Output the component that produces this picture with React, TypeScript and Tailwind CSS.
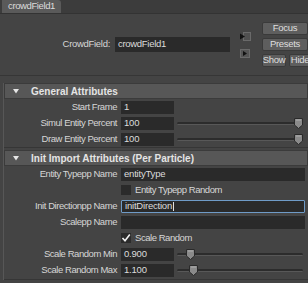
import React from "react";

const font = { fontFamily: '"Liberation Sans", Arial, sans-serif' };

function Label({ text, w = 113 }: { text: string; w?: number }) {
    return (
        <div
            className="shrink-0 text-right text-[9.5px] tracking-[-0.45px] text-[#d6d6d6] pr-[1px]"
            style={{ width: w }}
        >
            {text}
        </div>
    );
}

function Field({ value, width, focus }: { value: string; width: number; focus?: boolean }) {
    return (
        <div
            className={`h-[13px] bg-[#2a2a2a] flex items-center pl-[3px] text-[9.5px] tracking-[-0.2px] text-[#dcdcdc] leading-none ${
                focus ? "border border-[#6f9bc7] rounded-[1px]" : ""
            }`}
            style={{ width }}
        >
            {value}
            {focus && <span className="ml-[1px] w-px h-[9px] bg-[#e0e0e0]" />}
        </div>
    );
}

function Slider({ pos }: { pos: number }) {
    return (
        <div className="relative ml-[3px] w-[126px] h-[13px] flex items-center">
            <div className="w-full h-[3px] bg-[#2c2c2c] border-b border-[#585858] rounded-full" />
            <svg className="absolute top-[1px]" style={{ left: pos }} width="9" height="11" viewBox="0 0 9 11">
                <path d="M0.5 0.5 H8.5 V7 L4.5 10.5 L0.5 7 Z" fill="#8a8a8a" stroke="#2a2a2a" />
                <path d="M2 2 H7" stroke="#b0b0b0" />
            </svg>
        </div>
    );
}

function Row({ children }: { children: React.ReactNode }) {
    return <div className="h-[16px] flex items-center">{children}</div>;
}

function Check({ checked, text }: { checked?: boolean; text: string }) {
    return (
        <Row>
            <div className="w-[117px]" />
            <div className="w-[10px] h-[10px] bg-[#2b2b2b] flex items-center justify-center">
                {checked && (
                    <svg width="10" height="10" viewBox="0 0 10 10">
                        <path d="M1.5 5 L4 7.8 L8.8 1.5" fill="none" stroke="#f0f0f0" strokeWidth="1.6" />
                    </svg>
                )}
            </div>
            <span className="ml-[4px] text-[9.5px] tracking-[-0.45px] text-[#d6d6d6]">{text}</span>
        </Row>
    );
}

function Header({ title }: { title: string }) {
    return (
        <div className="h-[16px] flex items-center bg-[#575757] border border-[#3b3b3b]">
            <svg className="ml-[8px]" width="6" height="5" viewBox="0 0 6 5">
                <path d="M0 0 H6 L3 4.5 Z" fill="#e6e6e6" />
            </svg>
            <span className="ml-[12px] text-[10px] font-bold text-[#e4e4e4]">{title}</span>
        </div>
    );
}

function Button({ text, w }: { text: string; w: number }) {
    return (
        <div
            className="h-[13px] bg-[#5e5e5e] border border-[#3a3a3a] rounded-[2px] flex items-center justify-center text-[9.5px] tracking-[-0.3px] text-[#dedede]"
            style={{ width: w }}
        >
            {text}
        </div>
    );
}

export default function App() {
    return (
        <div className="w-[308px] h-[283px] bg-[#444444] overflow-hidden select-none" style={font}>
            {/* tab strip */}
            <div className="h-[14px] flex bg-[#3c3c3c] border-b border-[#333]">
                <div className="ml-[2px] w-[59px] bg-[#5a5a5a] rounded-tr-[3px] flex items-center justify-center text-[9.5px] tracking-[-0.4px] text-[#dcdcdc]">
                    crowdField1
                </div>
            </div>

            {/* node name + buttons */}
            <div className="h-[61px] flex items-start">
                <div className="mt-[23px] flex items-center">
                    <div className="w-[110px] text-right text-[9.5px] tracking-[-0.3px] text-[#d6d6d6]">CrowdField:</div>
                    <div className="ml-[5px] w-[115px] h-[15px] bg-[#2a2a2a] flex items-center pl-[3px] text-[9.5px] tracking-[-0.3px] text-[#dcdcdc]">
                        crowdField1
                    </div>
                </div>
                <div className="ml-[10px] mt-[18px] flex flex-col gap-[8px]">
                    <svg width="11" height="9" viewBox="0 0 11 9">
                        <rect x="3.5" y="0.5" width="7" height="8" fill="#505050" stroke="#6a6a6a" />
                        <path d="M0 1.5 L5 4.5 L0 7.5 Z" fill="#111" />
                    </svg>
                    <svg width="11" height="9" viewBox="0 0 11 9">
                        <rect x="0.5" y="0.5" width="9" height="8" fill="#555" stroke="#6a6a6a" />
                        <path d="M3 2 L7 4.5 L3 7 Z" fill="#111" />
                    </svg>
                </div>
                <div className="ml-[11px] mt-[8px] flex flex-col gap-[3px]">
                    <Button text="Focus" w={46} />
                    <Button text="Presets" w={46} />
                    <div className="flex gap-[3px]">
                        <Button text="Show" w={24} />
                        <Button text="Hide" w={22} />
                    </div>
                </div>
            </div>

            {/* separator */}
            <div className="h-[8px] border-t border-[#363636]" />

            {/* attribute panel */}
            <div className="ml-[3px] border-l border-[#575757]">
                <Header title="General Attributes" />
                <Row>
                    <Label text="Start Frame" w={114} />
                    <div className="ml-[3px]"><Field value="1" width={53} /></div>
                </Row>
                <Row>
                    <Label text="Simul Entity Percent" w={114} />
                    <div className="ml-[3px]"><Field value="100" width={53} /></div>
                    <Slider pos={117} />
                </Row>
                <Row>
                    <Label text="Draw Entity Percent" w={114} />
                    <div className="ml-[3px]"><Field value="100" width={53} /></div>
                    <Slider pos={117} />
                </Row>
                <div className="h-[3px] border-t border-[#363636]" />
                <Header title="Init Import Attributes (Per Particle)" />
                <Row>
                    <Label text="Entity Typepp Name" w={114} />
                    <div className="ml-[3px]"><Field value="entityType" width={184} /></div>
                </Row>
                <Check text="Entity Typepp Random" />
                <Row>
                    <Label text="Init Directionpp Name" w={114} />
                    <div className="ml-[3px]"><Field value="initDirection" width={184} focus /></div>
                </Row>
                <Row>
                    <Label text="Scalepp Name" w={114} />
                    <div className="ml-[3px]"><Field value="" width={184} /></div>
                </Row>
                <Check checked text="Scale Random" />
                <Row>
                    <Label text="Scale Random Min" w={114} />
                    <div className="ml-[3px]"><Field value="0.900" width={53} /></div>
                    <Slider pos={9} />
                </Row>
                <Row>
                    <Label text="Scale Random Max" w={114} />
                    <div className="ml-[3px]"><Field value="1.100" width={53} /></div>
                    <Slider pos={12} />
                </Row>
                <div className="h-[2px] border-b border-[#363636]" />
            </div>
        </div>
    );
}
